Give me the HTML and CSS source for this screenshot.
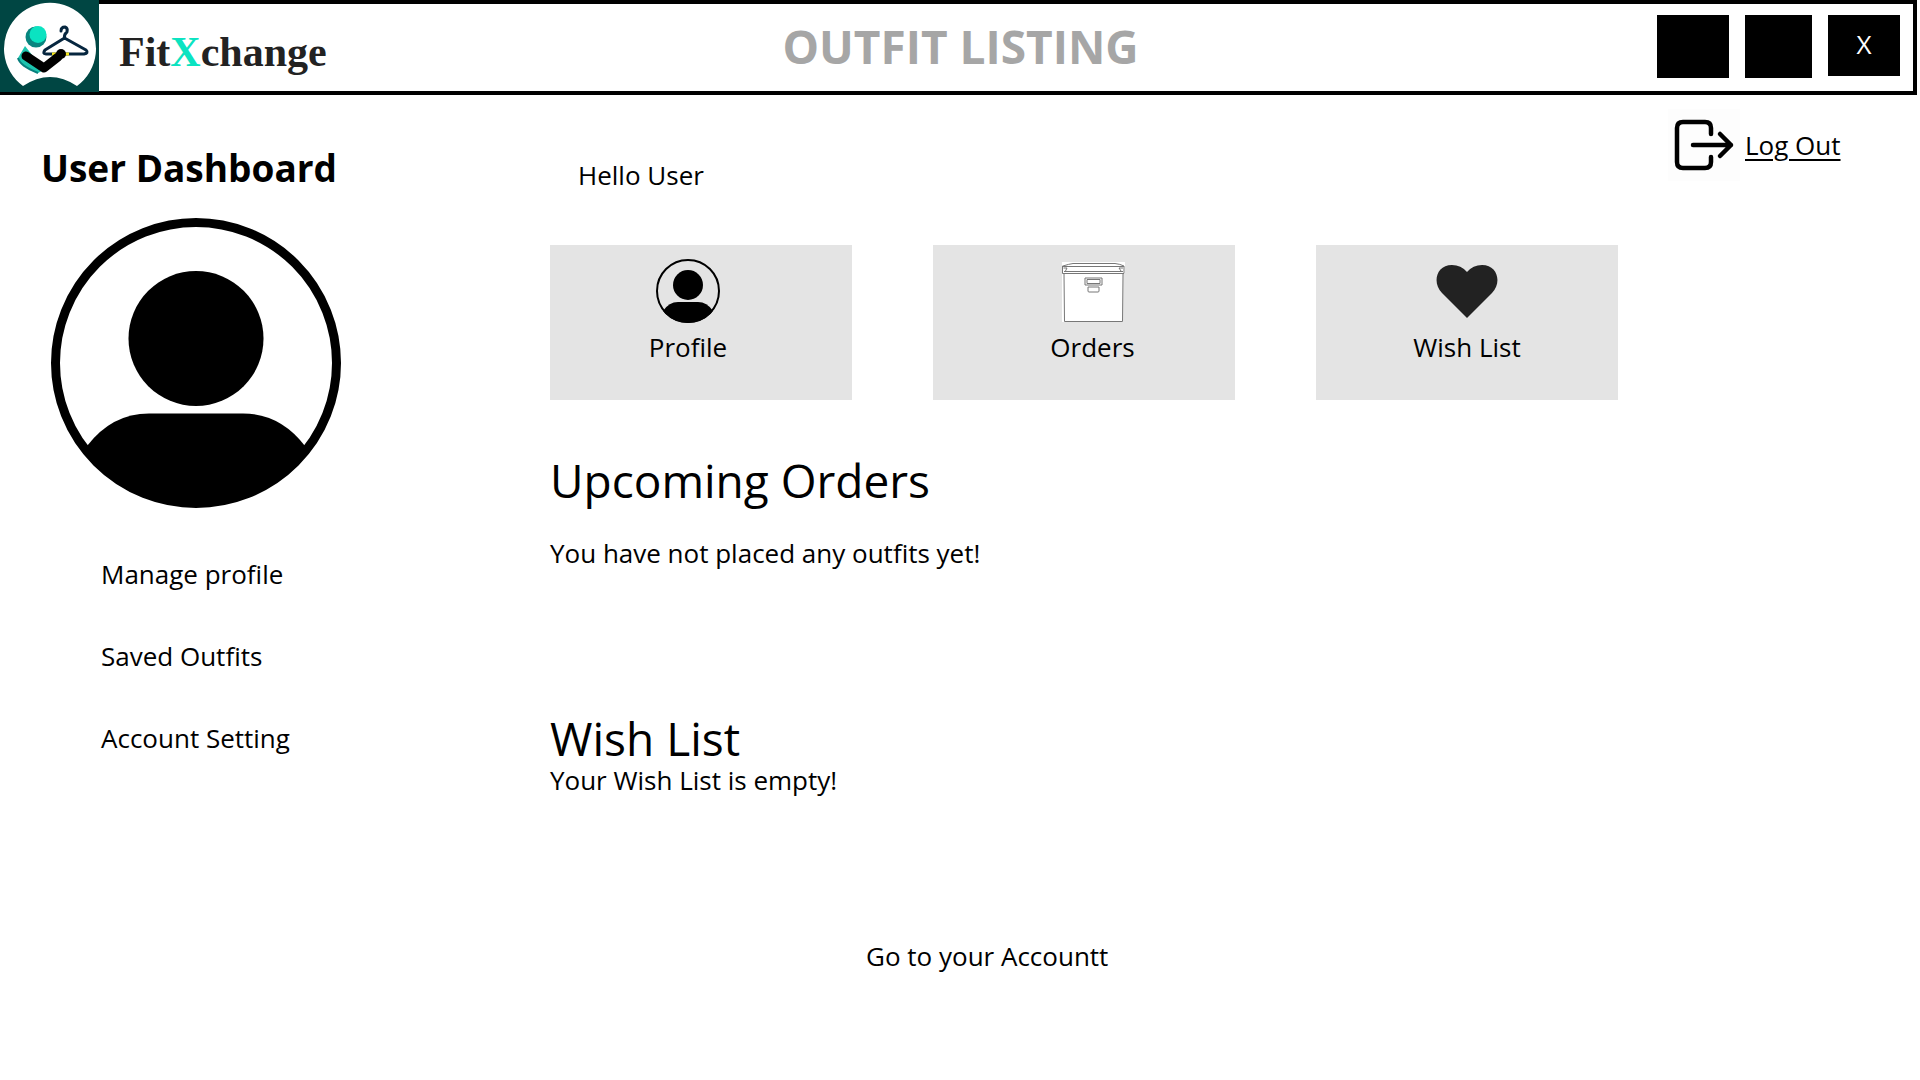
FILE: index.html
```html
<!DOCTYPE html>
<html lang="en">
<head>
<meta charset="utf-8">
<meta name="viewport" content="width=device-width, initial-scale=1">
<title>FitXchange – User Dashboard</title>
<link rel="stylesheet" href="styles.css">
</head>
<body>
<header class="topbar">
  <svg class="logo" viewBox="0 0 99 92" role="img" aria-label="FitXchange logo">
    <rect width="99" height="92" fill="#004643"/>
    <path d="M23 86A46 46 0 1 1 77 86Q50 68 23 86Z" fill="#fff"/>
    <path d="M25 46L18 58Q20 65 38 73L44 70Z" fill="#1cc4ae"/>
    <path d="M18 58Q20 66 38 73" fill="none" stroke="#077f7d" stroke-width="2"/>
    <circle cx="36" cy="37" r="10.500" fill="#08857f"/>
    <circle cx="38" cy="34.500" r="8.500" fill="#0be3c1"/>
    <path d="M61 31Q61 27 65 27Q68 28 67 32Q64 34 64.500 38L45 50Q42 54 46 54H84Q89 53 86 50L64.500 38" fill="none" stroke="#06263f" stroke-width="3" stroke-linecap="round" stroke-linejoin="round"/>
    <path d="M52 54H69" stroke="#f5e51b" stroke-width="3"/>
    <path d="M26 56L44 68L58 57" fill="none" stroke="#000" stroke-width="9" stroke-linecap="round" stroke-linejoin="round"/>
    <circle cx="61" cy="54" r="5" fill="#000"/>
  </svg>
  <div class="brand">Fit<span class="brand-x">X</span>change</div>
  <h1 class="page-title">OUTFIT LISTING</h1>
  <div class="window-controls">
    <button class="control" type="button" aria-label="Minimize"></button>
    <button class="control control-narrow" type="button" aria-label="Maximize"></button>
    <button class="control control-close" type="button" aria-label="Close">X</button>
  </div>
</header>

<div class="layout">
  <aside class="sidebar">
    <h2 class="sidebar-title">User Dashboard</h2>
    <svg class="avatar" viewBox="0 0 290 290" aria-hidden="true">
      <defs><clipPath id="face"><circle cx="145" cy="145" r="144"/></clipPath></defs>
      <circle cx="145" cy="145" r="140.500" fill="#fff" stroke="#000" stroke-width="9"/>
      <circle cx="145" cy="120.500" r="67.500"/>
      <path d="M36 228Q61 195.500 98 195.500H192Q229 195.500 254 228V290H36Z" clip-path="url(#face)"/>
    </svg>
    <nav class="side-nav">
      <a href="#profile">Manage profile</a>
      <a href="#saved">Saved Outfits</a>
      <a href="#settings">Account Setting</a>
    </nav>
  </aside>

  <main class="content">
    <p class="greeting">Hello User</p>
    <div class="cards">
      <a class="card card-profile" href="#profile">
        <svg class="card-icon" viewBox="0 0 64 64" aria-hidden="true">
          <defs><clipPath id="face-small"><circle cx="32" cy="32" r="32"/></clipPath></defs>
          <circle cx="32" cy="32" r="31" fill="none" stroke="#000" stroke-width="2"/>
          <circle cx="32" cy="26" r="15"/>
          <path d="M7 52Q13 43 22 43H42Q51 43 57 52V64H7Z" clip-path="url(#face-small)"/>
        </svg>
        <span>Profile</span>
      </a>
      <a class="card card-orders" href="#orders">
        <svg class="card-icon" viewBox="0 0 64 64" aria-hidden="true">
          <path d="M1 3H64V15H62V63H1Z" fill="#fff"/>
          <g fill="none" stroke="#777" stroke-width="1">
            <path d="M2 7Q8 5 12 4.500H54Q59 5 63 7V14.500H1.500V7ZM2 7.500H63M3 12.500H62M2.500 9L6 9L4.500 12M62 9H58L60 12"/>
            <path d="M3 15L3.500 62.500H61.500L62 15"/>
            <path d="M24 19H41V26H24ZM26 20.500H39V24.500H26ZM27 28H38V32Q38 33 37 33H28Q27 33 27 32Z"/>
          </g>
        </svg>
        <span>Orders</span>
      </a>
      <a class="card" href="#wish-list">
        <svg class="card-icon" viewBox="0 0 64 64" aria-hidden="true">
          <path d="M32 59L7 34C-3 24 1 6 17 6Q26 6 32 13Q38 6 47 6C63 6 67 24 57 34Z" fill="#222"/>
        </svg>
        <span>Wish List</span>
      </a>
    </div>
    <section class="orders" id="orders">
      <h2>Upcoming Orders</h2>
      <p>You have not placed any outfits yet!</p>
    </section>
    <section class="wish-list" id="wish-list">
      <h2>Wish List</h2>
      <p>Your Wish List is empty!</p>
    </section>
    <a class="account-link" href="#account">Go to your Accountt</a>
  </main>

  <a class="logout" href="#logout">
    <svg class="logout-icon" viewBox="0 0 72 72" aria-hidden="true">
      <rect width="72" height="72" fill="#fdfdfd"/>
      <path d="M43 25V19Q43 13 37 13H15Q9 13 9 19V53Q9 59 15 59H37Q43 59 43 53V48M25 36H63M52 25L63 36L52 47" fill="none" stroke="#000" stroke-width="4.500" stroke-linecap="round" stroke-linejoin="round"/>
    </svg>
    <span>Log Out</span>
  </a>
</div>
</body>
</html>
```
FILE: styles.css
```css
* {
  box-sizing: border-box;
}

body {
  margin: 0;
  background: #fff;
  color: #000;
  font: 26px/36px "Open Sans", "Noto Sans", sans-serif;
}

h1, h2, p {
  margin: 0;
}

a {
  color: inherit;
  text-decoration: none;
}

.topbar {
  position: relative;
  display: grid;
  grid-template-columns: 1fr auto 1fr;
  height: 95px;
  margin-right: 3px;
  padding-left: 8px;
  border: 4px solid #000;
  border-left: 0;
}

/* The logo tile covers the bar's top border. */
.logo {
  position: absolute;
  top: -4px;
  left: 0;
  width: 99px;
  height: 92px;
}

.brand {
  padding: 24px 0 0 111px;
  color: #222;
  font: bold 42px/48px "Liberation Serif", serif;
}

.brand-x {
  color: #0be3c1;
}

.page-title {
  padding-top: 18px;
  color: #a6a6a6;
  font-size: 46px;
  font-weight: 700;
  line-height: 48px;
}

.window-controls {
  display: flex;
  justify-content: flex-end;
  gap: 16px;
  padding: 11px 13px 0 0;
}

.control {
  width: 72px;
  height: 63px;
  padding: 0;
  border: 0;
  background: #000;
  color: #fff;
  font: inherit;
}

.control-narrow {
  width: 67px;
}

.control-close {
  height: 61px;
  padding-bottom: 4px;
}

.layout {
  display: grid;
  grid-template-columns: 550px 1fr 302px;
}

.sidebar {
  padding: 49px 0 0 41px;
}

.sidebar-title {
  font-size: 37px;
  font-weight: 700;
  line-height: 48px;
}

.avatar {
  display: block;
  width: 290px;
  margin: 26px 0 48px 10px;
}

.side-nav {
  display: flex;
  flex-direction: column;
  gap: 46px;
  padding-left: 60px;
}

.content {
  padding-top: 62px;
}

.greeting {
  padding-left: 28px;
}

.cards {
  display: grid;
  grid-template-columns: repeat(3, 1fr);
  gap: 81px;
  margin-top: 52px;
}

.card {
  display: flex;
  flex-direction: column;
  align-items: center;
  gap: 6px;
  padding: 14px 0 35px;
  background: #e4e4e4;
}

.card-profile {
  padding-right: 26px;
}

.card-orders {
  padding-left: 17px;
}

.card-icon {
  width: 64px;
  height: 64px;
}

.content h2 {
  font-size: 46px;
  font-weight: 400;
  line-height: 48px;
}

.orders {
  display: grid;
  gap: 31px;
  margin-top: 56px;
}

.wish-list {
  margin-top: 143px;
}

.account-link {
  display: inline-block;
  margin: 140px 0 48px 316px;
}

.logout {
  display: flex;
  gap: 5px;
  align-self: start;
  padding: 14px 0 0 50px;
  text-decoration: underline;
  text-underline-offset: 4px;
}

.logout span {
  padding-top: 18px;
}

.logout-icon {
  width: 72px;
  height: 72px;
}
```
